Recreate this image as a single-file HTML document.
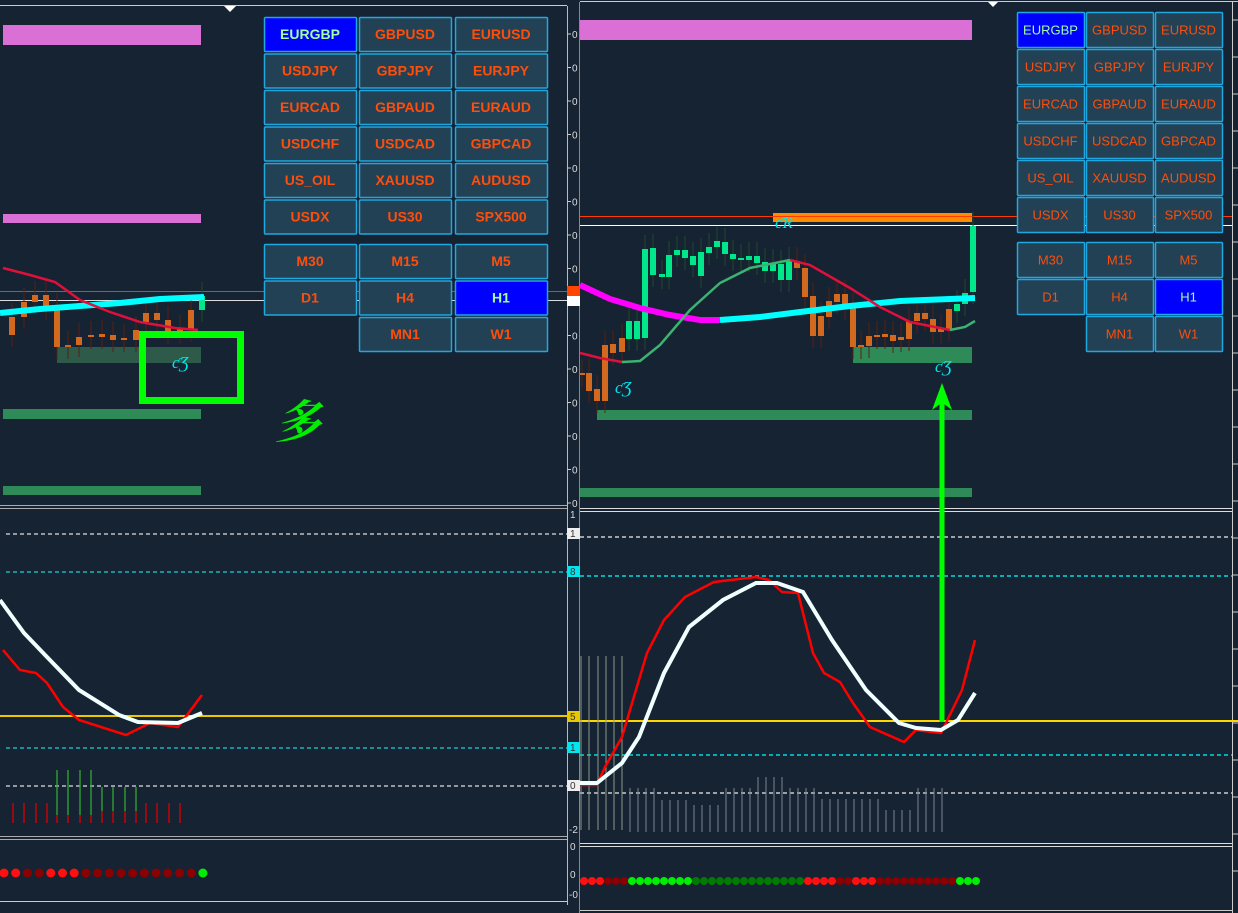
<!DOCTYPE html>
<html><head><meta charset="utf-8"><style>
html,body{margin:0;padding:0;background:#152332;width:1238px;height:913px;overflow:hidden}
svg{display:block}
.bt{font-family:"Liberation Sans",sans-serif;font-weight:bold;font-size:14px;fill:#ff4d0a;text-anchor:middle}
.bt2{font-family:"Liberation Sans",sans-serif;font-size:13px;fill:#ff4d0a;text-anchor:middle}
.ax{font-family:"Liberation Sans",sans-serif;font-size:10px;fill:#ddd}
</style></head><body>
<svg id="s" width="1238" height="913" xmlns="http://www.w3.org/2000/svg">
<rect width="1238" height="913" fill="#152332"/>
<!-- frames -->
<line x1="0" y1="5.5" x2="567" y2="5.5" stroke="#ccc"/>
<line x1="580" y1="1.5" x2="1238" y2="1.5" stroke="#ccc"/>
<polygon points="224,6 236,6 230,12" fill="#fff"/>
<polygon points="988,2 998,2 993,7" fill="#fff"/>
<line x1="567.5" y1="6" x2="567.5" y2="905" stroke="#bbb"/>
<line x1="579.5" y1="2" x2="579.5" y2="913" stroke="#888"/>
<line x1="1232.5" y1="2" x2="1232.5" y2="913" stroke="#ccc"/>
<line x1="0" y1="505.5" x2="567" y2="505.5" stroke="#aaa"/><line x1="0" y1="508.5" x2="567" y2="508.5" stroke="#aaa"/>
<line x1="0" y1="836.5" x2="567" y2="836.5" stroke="#aaa"/><line x1="0" y1="839.5" x2="567" y2="839.5" stroke="#aaa"/>
<line x1="0" y1="901.5" x2="567" y2="901.5" stroke="#ccc"/>
<line x1="580" y1="508.5" x2="1232" y2="508.5" stroke="#ddd"/><line x1="580" y1="511.5" x2="1232" y2="511.5" stroke="#ddd"/>
<line x1="580" y1="843.5" x2="1232" y2="843.5" stroke="#ddd"/><line x1="580" y1="846.5" x2="1232" y2="846.5" stroke="#ddd"/>
<line x1="580" y1="910.5" x2="1232" y2="910.5" stroke="#ccc"/>
<g id="ax"></g>
<!-- left main -->
<rect x="3" y="25" width="198" height="20" fill="#da70d6"/>
<rect x="3" y="214" width="198" height="9" fill="#da70d6"/>
<rect x="3" y="409" width="198" height="10" fill="#2e8b57"/>
<rect x="3" y="486" width="198" height="9" fill="#2e8b57"/>
<rect x="57" y="347" width="144" height="16" fill="#2e5a4a"/>
<line x1="0" y1="291.5" x2="567" y2="291.5" stroke="#e04010"/>
<line x1="0" y1="300.5" x2="567" y2="300.5" stroke="#ddd"/>
<!-- right main -->
<rect x="580" y="20" width="392" height="20" fill="#da70d6"/>
<rect x="597" y="410" width="375" height="10" fill="#2e8b57"/>
<rect x="580" y="488" width="392" height="9" fill="#2e8b57"/>
<rect x="853" y="347" width="119" height="16" fill="#2e8b57"/>
<rect x="773" y="213" width="199" height="9" fill="#ff8c00"/>
<line x1="580" y1="216.5" x2="1232" y2="216.5" stroke="#ff3c00"/>
<line x1="580" y1="225.5" x2="1232" y2="225.5" stroke="#fff"/>
<g id="cand"></g>
<!-- MAs left -->
<polyline points="0,313 40,309 80,306 120,303 160,299 204,297" fill="none" stroke="#00ffff" stroke-width="6"/>
<polyline points="3,268 30,275 55,282 80,300 110,312 140,322 175,328 198,330" fill="none" stroke="#e0103c" stroke-width="2.5"/>
<!-- MAs right -->
<polyline points="580,285 610,299 640,308 670,315 700,320 720,320" fill="none" stroke="#ff00ff" stroke-width="6"/>
<polyline points="720,320 760,317 800,312 850,306 900,301 975,298" fill="none" stroke="#00ffff" stroke-width="6"/>
<polyline points="580,353 600,358 622,362" fill="none" stroke="#e0103c" stroke-width="2.5"/>
<polyline points="622,362 640,361 660,345 690,310 720,283 750,268 790,260" fill="none" stroke="#3cb371" stroke-width="2.5"/>
<polyline points="790,260 810,265 850,288 880,307 910,322 950,330" fill="none" stroke="#e0103c" stroke-width="2.5"/>
<polyline points="950,330 965,327 975,321" fill="none" stroke="#3cb371" stroke-width="2.5"/>
<!-- green box & arrow -->
<rect x="142.5" y="334.5" width="98" height="66" fill="none" stroke="#00ff00" stroke-width="7"/>
<line x1="942" y1="400" x2="942" y2="722" stroke="#00ff00" stroke-width="5"/>
<polygon points="932,410 942,383 952,410 944,404 940,404" fill="#00ff00"/>
<g font-family="Liberation Serif,serif" font-style="italic" font-size="17" fill="#00e5ee">
<text x="172" y="368">ƈƷ</text><text x="615" y="393">ƈƷ</text><text x="775" y="228">ƈR</text><text x="935" y="372">ƈƷ</text></g>
<text x="275" y="438" font-family="Noto Serif CJK SC,serif" font-size="46" fill="#00ee00" font-style="italic" font-weight="bold">多</text>
<!-- indicator left -->
<g stroke-width="1.3" stroke-dasharray="4,3">
<line x1="6" y1="534" x2="567" y2="534" stroke="#ddd"/>
<line x1="6" y1="572" x2="567" y2="572" stroke="#1ccdd0"/>
<line x1="6" y1="748" x2="567" y2="748" stroke="#1ccdd0"/>
<line x1="6" y1="786" x2="567" y2="786" stroke="#ddd"/>
<line x1="580" y1="537" x2="1232" y2="537" stroke="#eee"/>
<line x1="580" y1="576" x2="1232" y2="576" stroke="#00ffff"/>
<line x1="580" y1="755" x2="1232" y2="755" stroke="#00ffff"/>
<line x1="580" y1="793" x2="1232" y2="793" stroke="#eee"/>
</g>
<line x1="0" y1="716" x2="567" y2="716" stroke="#e8c800" stroke-width="2"/>
<line x1="580" y1="721" x2="1238" y2="721" stroke="#ffd700" stroke-width="2"/>
<g id="hist"></g>
<polyline points="3,650 20,670 36,673 47,683 63,707 79,720 126,735 150,723 178,727 202,695" fill="none" stroke="#ff0000" stroke-width="2.5"/>
<polyline points="0,600 24,633 47,657 79,690 119,715 138,722 178,723 202,713" fill="none" stroke="#f0ffff" stroke-width="4"/>
<polyline points="580,785 597,785 605,767 622,737 630,710 647,653 664,620 685,597 714,582 756,577 769,580 782,592 798,593 813,653 824,673 840,682 853,703 870,727 904,742 916,730 941,733 962,690 975,640" fill="none" stroke="#ff0000" stroke-width="2.5"/>
<polyline points="580,783 597,783 622,763 639,737 664,673 689,627 723,600 756,583 777,583 803,592 832,640 866,690 899,723 916,728 941,730 958,720 975,693" fill="none" stroke="#f0ffff" stroke-width="4"/>
<line x1="942" y1="500" x2="942" y2="722" stroke="#00ff00" stroke-width="5"/>
<g id="dots"></g>
<!-- axis labels -->
<g class="ax">
<rect x="567" y="286" width="13" height="10" fill="#ff4500"/><rect x="567" y="296" width="13" height="10" fill="#fff"/>
<rect x="567" y="528" width="13" height="11" fill="#eee"/><rect x="567" y="566" width="13" height="11" fill="#00e5ee"/>
<rect x="567" y="711" width="13" height="11" fill="#e8c800"/><rect x="567" y="742" width="13" height="11" fill="#00e5ee"/><rect x="567" y="780" width="13" height="11" fill="#eee"/>
<text x="570" y="518">1</text><text x="570" y="537" fill="#333">1</text><text x="570" y="575" fill="#333">8</text><text x="570" y="720" fill="#333">5</text><text x="570" y="751" fill="#333">1</text><text x="570" y="789" fill="#333">0</text><text x="569" y="833">-2</text>
<text x="570" y="850">0</text><text x="570" y="878">0</text><text x="569" y="898">-0</text>
</g>
<g id="btn"></g>
</svg>
<script>
var NS="http://www.w3.org/2000/svg";
function el(p,t,a,txt){var e=document.createElementNS(NS,t);for(var k in a)e.setAttribute(k,a[k]);if(txt)e.textContent=txt;document.getElementById(p).appendChild(e);return e;}
// axis ticks
for(var y=34;y<505;y+=33.5){el('ax','line',{x1:567,y1:y,x2:571,y2:y,stroke:'#ccc'});el('ax','text',{x:572,y:y+4,'class':'ax'},'0');}
for(var y=20;y<905;y+=37){el('ax','line',{x1:1232,y1:y,x2:1238,y2:y,stroke:'#ccc'});}
// candles
var O='#d2691e',G='#00e68a';
var R=[[582,373,375,O],[589,373,391,O],[597,389,401,O],[605,345,401,O],[613,344,353,O],[622,338,352,O],[629,321,339,G],[637,321,339,G],[645,249,338,G],[653,248,275,G],[662,274,277,G],[669,255,277,G],[677,250,255,G],[685,250,258,G],[693,256,265,G],[701,252,276,G],[709,247,253,G],[717,241,247,G],[725,242,254,G],[733,254,259,G],[741,258,259,G],[749,256,260,G],[757,256,263,G],[765,262,271,G],[773,263,271,G],[781,264,280,G],[789,261,280,G],[797,261,268,O],[805,268,297,O],[813,296,336,O],[821,316,336,O],[829,301,317,O],[837,294,302,O],[845,294,308,O],[853,307,347,O],[861,345,347,O],[869,336,346,O],[877,335,337,O],[885,334,337,O],[893,335,341,O],[901,337,340,O],[909,321,339,O],[917,313,321,O],[925,313,319,O],[933,319,332,O],[941,329,332,O],[949,309,329,O],[957,304,311,G],[965,293,304,G],[973,226,292,G]];
var L=[[12,317,335,O],[24,302,317,O],[35,295,302,O],[46,295,308,O],[57,307,347,O],[68,345,347,O],[79,337,345,O],[91,335,337,O],[102,334,337,O],[113,335,340,O],[124,338,340,O],[136,330,340,O],[146,313,322,O],[157,313,320,O],[168,320,332,O],[180,329,331,O],[191,310,330,O],[202,296,310,G]];
R.concat(L).forEach(function(c){el('cand','line',{x1:c[0],y1:c[1]-14,x2:c[0],y2:c[2]+12,stroke:c[3]==G?'#1f4a2a':'#5a2010','stroke-width':1});el('cand','rect',{x:c[0]-3,y:c[1],width:6,height:Math.max(2,c[2]-c[1]),fill:c[3]});});
// hist left
[13,24,36,47,146,157,169,180].forEach(function(x){el('hist','line',{x1:x,y1:803,x2:x,y2:823,stroke:'#d00','stroke-width':1.3});});
[57,68,80,91].forEach(function(x){el('hist','line',{x1:x,y1:770,x2:x,y2:815,stroke:'#3a3','stroke-width':1.3});el('hist','line',{x1:x,y1:815,x2:x,y2:823,stroke:'#d00','stroke-width':1.3});});
[102,113,125,136].forEach(function(x){el('hist','line',{x1:x,y1:787,x2:x,y2:811,stroke:'#3a3','stroke-width':1.3});el('hist','line',{x1:x,y1:811,x2:x,y2:823,stroke:'#d00','stroke-width':1.3});});
// hist right
[581,589,598,606,614,622].forEach(function(x){el('hist','line',{x1:x,y1:656,x2:x,y2:830,stroke:'#8a9a8a','stroke-width':1});});
var hts=[788,788,788,788,800,800,800,800,805,805,805,805,788,788,788,788,777,777,777,777,788,788,788,788,799,799,799,799,799,799,799,799,810,810,810,810,788,788,788,788];
for(var i=0;i<40;i++){var x=630+i*8;if(x>944)break;el('hist','line',{x1:x,y1:hts[i],x2:x,y2:832,stroke:'#7a8590','stroke-width':1});}
// dots
var r='#ff1010',d='#8b0000',g='#00ee00',dg='#007a00';
var pl=[r,r,d,d,r,r,r,d,d,d,d,d,d,d,d,d,d,g];
pl.forEach(function(c,i){el('dots','circle',{cx:4+i*11.7,cy:873,r:4.5,fill:c});});
var pr=[];function add(c,n){for(var i=0;i<n;i++)pr.push(c);}add(r,3);add(d,3);add(g,8);add(dg,14);add(r,4);add(d,2);add(r,3);add(d,10);add(g,3);
pr.forEach(function(c,i){el('dots','circle',{cx:584+i*8,cy:881,r:4,fill:c});});
// buttons
function btn(x,y,w,h,t,sel,cls){el('btn','rect',{x:x+0.5,y:y+0.5,width:w,height:h,fill:sel?'#0000ff':'#234154',stroke:'#1fa8e0','stroke-width':1.5,rx:1});var e=el('btn','text',{x:x+w/2,y:y+h/2+5,'class':cls},t);if(sel)e.setAttribute('style','fill:#a0ffa0');}
var names=[['EURGBP','GBPUSD','EURUSD'],['USDJPY','GBPJPY','EURJPY'],['EURCAD','GBPAUD','EURAUD'],['USDCHF','USDCAD','GBPCAD'],['US_OIL','XAUUSD','AUDUSD'],['USDX','US30','SPX500']];
var tf=[['M30','M15','M5'],['D1','H4','H1'],['','MN1','W1']];
var lx=[264,359,455],rx=[1017,1086,1155];
for(var i=0;i<6;i++)for(var j=0;j<3;j++){btn(lx[j],17+i*36.5,92,34,names[i][j],i==0&&j==0,'bt');btn(rx[j],12+i*37,67,35,names[i][j],i==0&&j==0,'bt2');}
for(var i=0;i<3;i++)for(var j=0;j<3;j++){if(!tf[i][j])continue;btn(lx[j],244+i*36.5,92,34,tf[i][j],i==1&&j==2,'bt');btn(rx[j],242+i*37,67,35,tf[i][j],i==1&&j==2,'bt2');}
</script>
</body></html>
